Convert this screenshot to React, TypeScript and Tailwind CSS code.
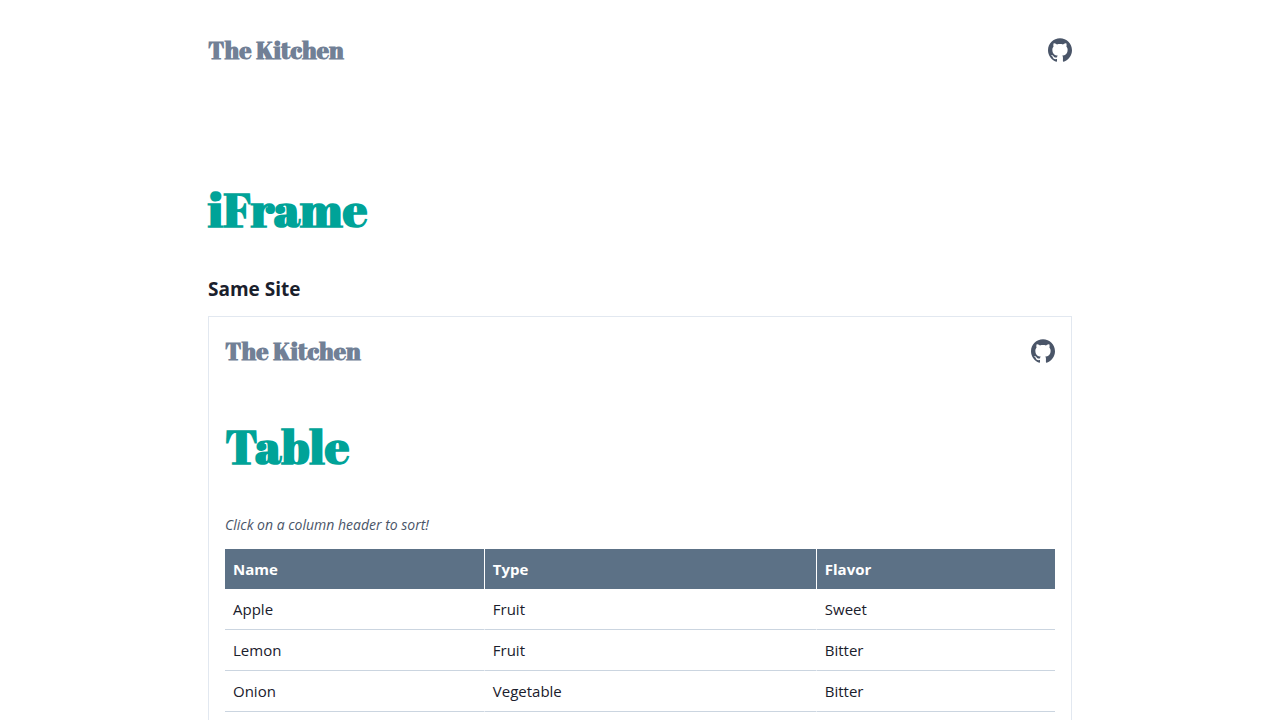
import { useState } from 'react';

type Food = { name: string; type: string; flavor: string };
type Column = { key: keyof Food; label: string; width: string };

const foods: Food[] = [
  { name: 'Apple', type: 'Fruit', flavor: 'Sweet' },
  { name: 'Lemon', type: 'Fruit', flavor: 'Bitter' },
  { name: 'Onion', type: 'Vegetable', flavor: 'Bitter' },
];

const columns: Column[] = [
  { key: 'name', label: 'Name', width: 'w-[31.3%]' },
  { key: 'type', label: 'Type', width: 'w-[40%]' },
  { key: 'flavor', label: 'Flavor', width: '' },
];

function SiteHeader() {
  return (
    <header className="flex items-center justify-between">
      <a
        href="#home"
        className="font-['Abril_Fatface','Liberation_Serif',serif] text-2xl leading-9 font-bold text-[#718096]"
      >
        The Kitchen
      </a>
      <a href="#github" aria-label="GitHub" className="text-[#4a5568]">
        <svg viewBox="0 0 24 24" fill="currentColor" className="size-6" aria-hidden="true">
          <path d="M12 .297c-6.63 0-12 5.373-12 12 0 5.303 3.438 9.8 8.205 11.385.6.113.82-.258.82-.577 0-.285-.01-1.04-.015-2.04-3.338.724-4.042-1.61-4.042-1.61C4.422 18.07 3.633 17.7 3.633 17.7c-1.087-.744.084-.729.084-.729 1.205.084 1.838 1.236 1.838 1.236 1.07 1.835 2.809 1.305 3.495.998.108-.776.417-1.305.76-1.605-2.665-.3-5.466-1.332-5.466-5.93 0-1.31.465-2.38 1.235-3.22-.135-.303-.54-1.523.105-3.176 0 0 1.005-.322 3.3 1.23.96-.267 1.98-.399 3-.405 1.02.006 2.04.138 3 .405 2.28-1.552 3.285-1.23 3.285-1.23.645 1.653.24 2.873.12 3.176.765.84 1.23 1.91 1.23 3.22 0 4.61-2.805 5.625-5.475 5.92.42.36.81 1.096.81 2.22 0 1.606-.015 2.896-.015 3.286 0 .315.21.69.825.57C20.565 22.092 24 17.592 24 12.297c0-6.627-5.373-12-12-12" />
        </svg>
      </a>
    </header>
  );
}

function Title({ children }: { children: string }) {
  return (
    <h1 className="pb-0.5 font-['Abril_Fatface','Liberation_Serif',serif] text-5xl leading-[58px] font-bold text-[#00a398]">
      {children}
    </h1>
  );
}

function FoodTable() {
  const [sortKey, setSortKey] = useState<keyof Food | null>(null);
  const rows = sortKey ? [...foods].sort((a, b) => a[sortKey].localeCompare(b[sortKey])) : foods;

  return (
    <table className="w-full table-fixed border-separate border-spacing-0 text-left">
      <thead>
        <tr>
          {columns.map((column) => (
            <th
              key={column.key}
              scope="col"
              className={`${column.width} border-r border-white bg-[#5c7186] p-0 text-white last:border-r-0`}
            >
              <button
                type="button"
                onClick={() => setSortKey(column.key)}
                className="block w-full cursor-pointer p-2 text-left font-bold"
              >
                {column.label}
              </button>
            </th>
          ))}
        </tr>
      </thead>
      <tbody>
        {rows.map((food) => (
          <tr key={food.name}>
            {columns.map((column) => (
              <td
                key={column.key}
                className="border-r border-b border-r-white border-b-[#cbd5e0] p-2 last:border-r-0"
              >
                {food[column.key]}
              </td>
            ))}
          </tr>
        ))}
      </tbody>
    </table>
  );
}

export default function App() {
  return (
    <div className="mx-auto max-w-4xl px-4 pt-8 font-['Segoe_UI','Open_Sans',sans-serif] text-[15px] leading-6 text-[#1a202c]">
      <SiteHeader />
      <main className="pt-28">
        <Title>iFrame</Title>
        <h2 className="mt-8 text-[19px] leading-[34px] font-bold">Same Site</h2>
        <section aria-label="Same site frame" className="mt-2.5 min-h-[600px] border border-[#e2e8f0] p-4">
          <SiteHeader />
          <div className="pt-12">
            <Title>Table</Title>
            <p className="mt-9 mb-3 text-sm leading-6 text-[#4a5568] italic">
              Click on a column header to sort!
            </p>
            <FoodTable />
          </div>
        </section>
      </main>
    </div>
  );
}
